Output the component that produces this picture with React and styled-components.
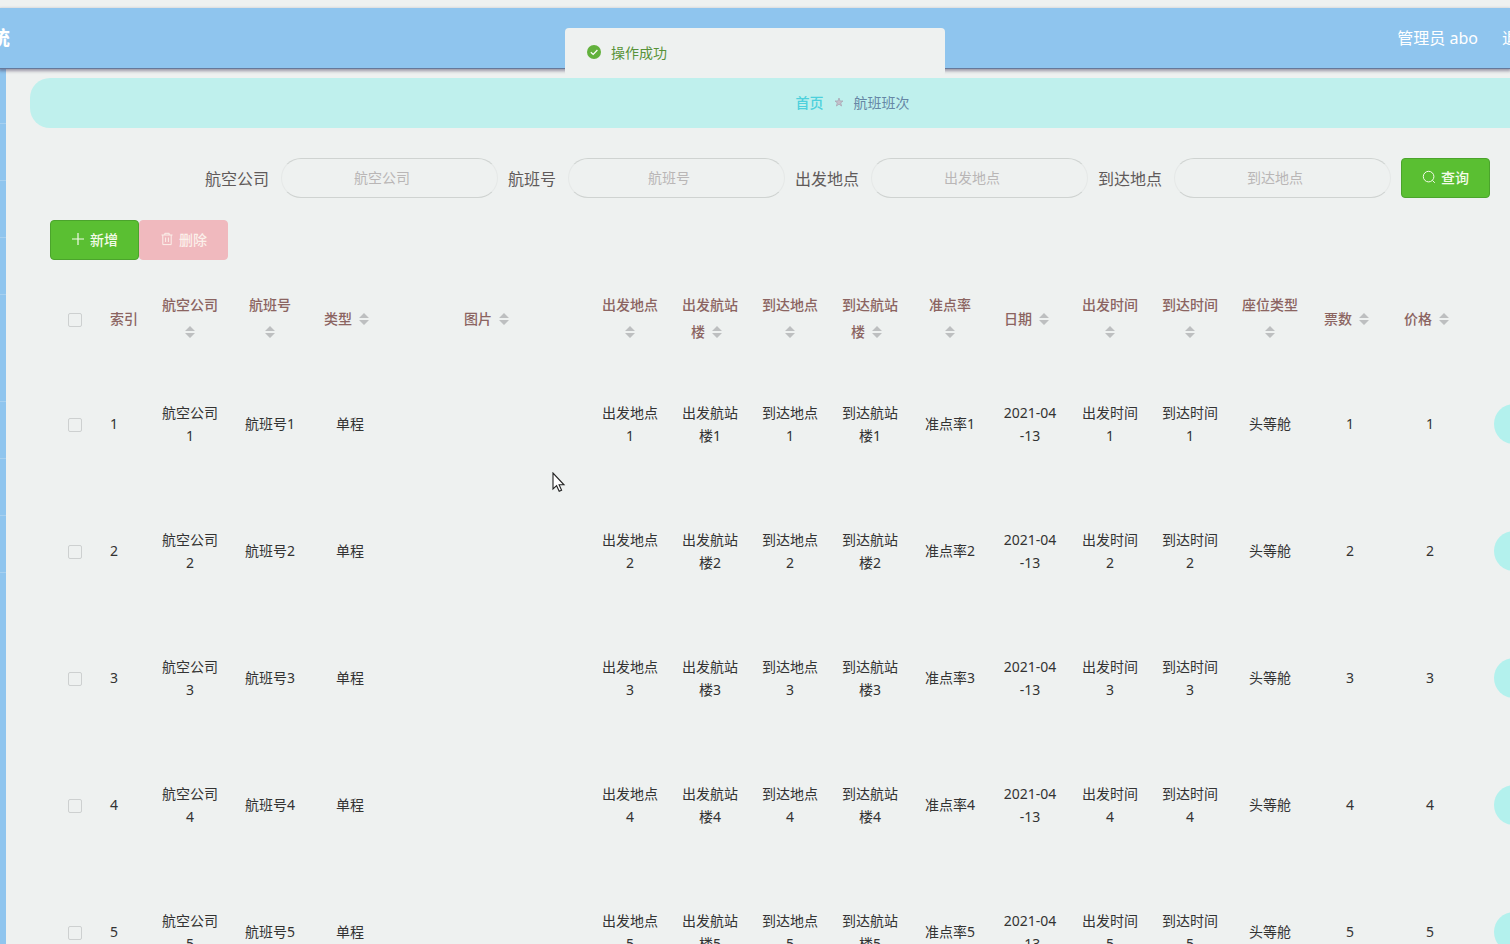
import { useState } from "react";
import styled, { createGlobalStyle, css } from "styled-components";

const fields = ["航空公司", "航班号", "出发地点", "到达地点"];

const columns = [
  { label: "航空公司", width: 80, value: (n) => `航空公司${n}` },
  { label: "航班号", width: 80, value: (n) => `航班号${n}` },
  { label: "类型", width: 80, value: () => "单程" },
  { label: "图片", width: 200, value: () => "" },
  { label: "出发地点", width: 80, value: (n) => `出发地点${n}` },
  { label: "出发航站楼", width: 80, value: (n) => `出发航站楼${n}` },
  { label: "到达地点", width: 80, value: (n) => `到达地点${n}` },
  { label: "到达航站楼", width: 80, value: (n) => `到达航站楼${n}` },
  { label: "准点率", width: 80, value: (n) => `准点率${n}` },
  { label: "日期", width: 80, value: () => "2021-04\n-13" },
  { label: "出发时间", width: 80, value: (n) => `出发时间${n}` },
  { label: "到达时间", width: 80, value: (n) => `到达时间${n}` },
  { label: "座位类型", width: 80, value: () => "头等舱" },
  { label: "票数", width: 80, value: (n) => n },
  { label: "价格", width: 80, value: (n) => n },
];

const rows = [1, 2, 3, 4, 5];

// the fifth entry is an opened group, so it is taller
const menu = [56, 57, 57, 57, 107, 57, 57, 57];

function App() {
  const [checked, setChecked] = useState([]);

  const toggle = (n) => {
    setChecked(
      checked.includes(n) ? checked.filter((c) => c !== n) : [...checked, n]
    );
  };

  return (
    <StPage>
      <GlobalStyle />
      <StHeader>
        <StTitle>统</StTitle>
        <StUser>
          <span>管理员 abo</span>
          <StLogout href="#logout">退</StLogout>
        </StUser>
      </StHeader>

      <StBody>
        <StSidebar>
          {menu.map((height, i) => (
            <StMenuItem key={i} $height={height} />
          ))}
        </StSidebar>

        <StMain>
          <StBreadcrumb>
            <StHome href="#home">首页</StHome>
            <StarIcon />
            <span>航班班次</span>
          </StBreadcrumb>

          <StContent>
            <StForm onSubmit={(e) => e.preventDefault()}>
              {fields.map((name, i) => (
                <StField key={name}>
                  <label htmlFor={`field${i}`}>{name}</label>
                  <StInput id={`field${i}`} placeholder={name} />
                </StField>
              ))}
              <StButton type="submit">
                <SearchIcon />
                查询
              </StButton>
            </StForm>

            <StActions>
              <StButton type="button">
                <PlusIcon />
                新增
              </StButton>
              <StButton type="button" $danger disabled={!checked.length}>
                <TrashIcon />
                删除
              </StButton>
            </StActions>

            <StTable>
              <colgroup>
                <StCol $width={50} />
                <StCol $width={50} />
                {columns.map((c) => (
                  <StCol key={c.label} $width={c.width} />
                ))}
                <StCol $width={185} />
              </colgroup>
              <thead>
                <tr>
                  <StTh>
                    <StCheck
                      type="checkbox"
                      aria-label="全选"
                      checked={checked.length === rows.length}
                      onChange={(e) => setChecked(e.target.checked ? rows : [])}
                    />
                  </StTh>
                  <StTh $left>索引</StTh>
                  {columns.map((c) => (
                    <StTh key={c.label}>
                      {c.label}
                      <StSort type="button" aria-label={`${c.label}排序`}>
                        <SortIcon />
                      </StSort>
                    </StTh>
                  ))}
                  <StTh />
                </tr>
              </thead>
              <tbody>
                {rows.map((n) => (
                  <tr key={n}>
                    <StTd>
                      <StCheck
                        type="checkbox"
                        aria-label={`选择${n}`}
                        checked={checked.includes(n)}
                        onChange={() => toggle(n)}
                      />
                    </StTd>
                    <StTd $left>{n}</StTd>
                    {columns.map((c) => (
                      <StTd key={c.label}>{c.value(n)}</StTd>
                    ))}
                    <StTd $actions>
                      <StDetail type="button" aria-label={`详情${n}`} />
                    </StTd>
                  </tr>
                ))}
              </tbody>
            </StTable>
          </StContent>
        </StMain>
      </StBody>

      <StMessage role="status">
        <SuccessIcon />
        操作成功
      </StMessage>
      <StPointer width="14" height="21" viewBox="0 0 14 21" aria-hidden="true">
        <path
          d="M1 1V17L4.6 13.7L7.2 19.3L9.6 18.2L7.1 12.8H12Z"
          fill="#fff"
          stroke="#222"
          strokeWidth="1.1"
        />
      </StPointer>
    </StPage>
  );
}

export default App;

function StarIcon() {
  return (
    <svg width="14" height="14" viewBox="0 0 14 14" aria-hidden="true">
      <path
        d="M7 3L8.1 6H11L8.7 7.9L9.6 11L7 9.2L4.4 11L5.3 7.9L3 6H5.9Z"
        fill="#c3bfca"
        stroke="#a9a8b5"
        strokeWidth="0.8"
      />
    </svg>
  );
}

function SearchIcon() {
  return (
    <svg width="14" height="14" viewBox="0 0 14 14" aria-hidden="true">
      <circle cx="6.6" cy="6.6" r="5.3" fill="none" stroke="currentColor" />
      <path d="M10.4 10.4L12.8 12.8" stroke="currentColor" />
    </svg>
  );
}

function PlusIcon() {
  return (
    <svg width="14" height="14" viewBox="0 0 14 14" aria-hidden="true">
      <path d="M7 1V13M1 7H13" stroke="currentColor" strokeWidth="1.2" />
    </svg>
  );
}

function TrashIcon() {
  return (
    <svg width="14" height="14" viewBox="0 0 14 14" aria-hidden="true">
      <path
        d="M1.5 3H12.5M2.8 3V12.6H11.2V3M4.8 3V1.3H9.2V3M5.6 5.5V10M8.4 5.5V10"
        fill="none"
        stroke="currentColor"
      />
    </svg>
  );
}

function SortIcon() {
  return (
    <svg width="10" height="12" viewBox="0 0 10 12" aria-hidden="true">
      <path d="M5 0L10 5H0ZM0 7H10L5 12Z" fill="#bdbfc0" />
    </svg>
  );
}

function SuccessIcon() {
  return (
    <svg width="14" height="14" viewBox="0 0 14 14" aria-hidden="true">
      <circle cx="7" cy="7" r="7" fill="#62b13c" />
      <path
        d="M3.8 7.2L6.2 9.5L10.4 5"
        fill="none"
        stroke="#fff"
        strokeWidth="1.2"
      />
    </svg>
  );
}

const GlobalStyle = createGlobalStyle`
  * {
    box-sizing: border-box;
  }

  body {
    margin: 0;
    background-color: #eef1f0;
    color: #333;
    font-family: "Noto Sans", "Noto Sans CJK SC", sans-serif;
    font-size: 14px;
  }

  button,
  input {
    font-family: inherit;
    font-size: inherit;
  }
`;

const StPage = styled.div`
  position: relative;
  height: 100vh;
  padding-top: 8px;
  overflow: hidden;
  display: flex;
  flex-direction: column;
`;

const StHeader = styled.header`
  position: relative;
  z-index: 1;
  flex: none;
  height: 60px;
  padding-bottom: 2px;
  display: flex;
  align-items: center;
  justify-content: space-between;
  background-color: #8fc5ee;
  color: #fff;
  box-shadow: 0 1px 0 #66799a, 0 2px 3px 1px rgba(70, 60, 90, 0.5);
`;

const StTitle = styled.h1`
  width: 10px;
  margin: 0;
  display: flex;
  justify-content: flex-end;
  overflow: hidden;
  font-size: 20px;
  font-weight: 700;
`;

const StUser = styled.div`
  display: flex;
  gap: 24px;
  font-size: 16px;
`;

const StLogout = styled.a`
  width: 8px;
  overflow: hidden;
  color: inherit;
  text-decoration: none;
  white-space: nowrap;
`;

const StBody = styled.div`
  flex: 1;
  min-height: 0;
  display: flex;
`;

const StSidebar = styled.nav`
  flex: none;
  width: 6px;
  background-color: #8fc5ee;
`;

const StMenuItem = styled.div`
  height: ${(props) => props.$height}px;
  border-bottom: 1px solid #a6d0f0;
`;

const StMain = styled.main`
  flex: 1 0 auto;
  padding: 10px 24px 0;
`;

const StBreadcrumb = styled.nav`
  height: 50px;
  padding-bottom: 2px;
  display: flex;
  align-items: center;
  justify-content: center;
  gap: 8px;
  border-radius: 20px;
  background-color: #bff0ed;
  color: #6586a5;
`;

const StHome = styled.a`
  color: #4dd0dc;
  font-weight: 500;
  text-decoration: none;
`;

const StContent = styled.section`
  padding: 30px 20px 0;
`;

const StForm = styled.form`
  display: flex;
  justify-content: center;
  gap: 10px;
  padding-right: 10px;
`;

const StField = styled.div`
  display: flex;
  align-items: center;
  gap: 12px;
  color: #605a5a;
  font-size: 16px;
`;

const StInput = styled.input`
  width: 217px;
  height: 40px;
  padding: 0 15px 2px 0;
  border: 1px solid #cfd3d1;
  border-left-color: #e5e8e7;
  border-right-color: #e5e8e7;
  border-radius: 20px;
  background-color: transparent;
  color: #605a5a;
  font-size: 14px;
  text-align: center;
  outline: none;

  &::placeholder {
    color: #b9b6b6;
  }
`;

const StButton = styled.button`
  width: 89px;
  height: 40px;
  padding: 0 0 2px;
  display: flex;
  align-items: center;
  justify-content: center;
  gap: 5px;
  border: 1px solid #4ba42c;
  border-radius: 4px;
  background-color: #5abf32;
  color: #f4fbe9;
  font-weight: 500;
  cursor: pointer;

  ${(props) =>
    props.$danger &&
    css`
      border-color: #f0b9be;
      background-color: #f0b9be;
      color: #fbf0ea;
    `}
`;

const StActions = styled.div`
  display: flex;
  margin: 22px 0 16px;
`;

const StTable = styled.table`
  width: 1605px;
  table-layout: fixed;
  border-collapse: collapse;
`;

const StCol = styled.col`
  width: ${(props) => props.$width}px;
`;

const StTh = styled.th`
  height: 84px;
  padding: 0 10px;
  color: #8b6461;
  font-weight: 500;
  line-height: 27px;
  text-align: ${(props) => (props.$left ? "left" : "center")};
`;

const StTd = styled.td`
  height: 127px;
  padding: 0 ${(props) => (props.$actions ? 24 : 10)}px;
  line-height: 23px;
  text-align: ${(props) => (props.$left ? "left" : "center")};
  white-space: pre-line;
`;

const StCheck = styled.input`
  appearance: none;
  width: 14px;
  height: 14px;
  margin: 0;
  border: 1px solid #cdd0d0;
  border-radius: 2px;
  vertical-align: middle;

  &:checked {
    background-color: #5abf32;
  }
`;

const StSort = styled.button`
  width: 24px;
  height: 14px;
  padding: 0 0 2px;
  display: inline-flex;
  align-items: center;
  justify-content: center;
  border: none;
  background: none;
  vertical-align: middle;
  cursor: pointer;
`;

const StDetail = styled.button`
  display: block;
  width: 100%;
  height: 40px;
  border: none;
  border-radius: 20px;
  background-color: #b3f1ed;
  cursor: pointer;
`;

const StMessage = styled.div`
  position: absolute;
  z-index: 2;
  top: 28px;
  left: 50%;
  width: 380px;
  height: 48px;
  padding-left: 22px;
  display: flex;
  align-items: center;
  gap: 10px;
  border-radius: 4px;
  background-color: #eef1f0;
  color: #579238;
  transform: translateX(-50%);
`;

const StPointer = styled.svg`
  position: absolute;
  top: 472px;
  left: 552px;
`;
